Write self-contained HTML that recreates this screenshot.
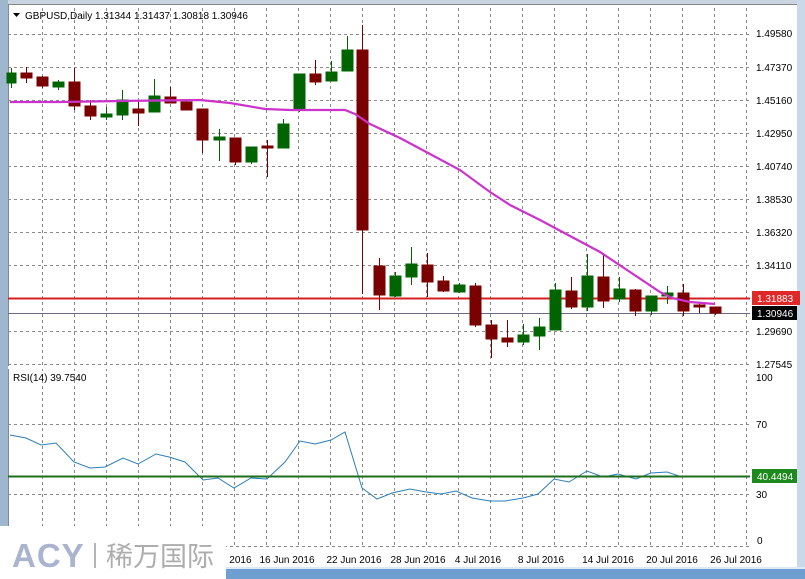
<!DOCTYPE html>
<html><head><meta charset="utf-8"><style>
html,body{margin:0;padding:0;width:805px;height:579px;overflow:hidden;background:#fff}
svg{display:block}
text{font-family:"Liberation Sans",sans-serif;font-size:10px;fill:#000}
</style></head><body>
<svg width="805" height="579" viewBox="0 0 805 579" xmlns="http://www.w3.org/2000/svg">
<rect x="0" y="0" width="805" height="579" fill="#fff"/>
<rect x="0" y="0" width="805" height="4" fill="#c8d4e0"/>
<rect x="0" y="0" width="8" height="579" fill="#9fb6cf"/>
<rect x="797" y="0" width="8" height="579" fill="#c9d9ea"/>
<rect x="0" y="569" width="805" height="10" fill="#6f9fd0"/>
<rect x="0" y="567" width="805" height="2" fill="#dbe8f5"/>
<rect x="8" y="4" width="789" height="563" fill="#fff"/>
<line x1="8" y1="4.5" x2="797" y2="4.5" stroke="#888"/>
<line x1="8.5" y1="4" x2="8.5" y2="567" stroke="#888"/>
<g stroke="#8a8a8a" stroke-width="1" stroke-dasharray="3,3">
<line x1="42.5" y1="8" x2="42.5" y2="547"/><line x1="74.5" y1="8" x2="74.5" y2="547"/><line x1="106.5" y1="8" x2="106.5" y2="547"/><line x1="138.5" y1="8" x2="138.5" y2="547"/><line x1="170.5" y1="8" x2="170.5" y2="547"/><line x1="202.5" y1="8" x2="202.5" y2="547"/><line x1="234.5" y1="8" x2="234.5" y2="547"/><line x1="266.5" y1="8" x2="266.5" y2="547"/><line x1="298.5" y1="8" x2="298.5" y2="547"/><line x1="330.5" y1="8" x2="330.5" y2="547"/><line x1="362.5" y1="8" x2="362.5" y2="547"/><line x1="394.5" y1="8" x2="394.5" y2="547"/><line x1="426.5" y1="8" x2="426.5" y2="547"/><line x1="458.5" y1="8" x2="458.5" y2="547"/><line x1="490.5" y1="8" x2="490.5" y2="547"/><line x1="522.5" y1="8" x2="522.5" y2="547"/><line x1="554.5" y1="8" x2="554.5" y2="547"/><line x1="586.5" y1="8" x2="586.5" y2="547"/><line x1="618.5" y1="8" x2="618.5" y2="547"/><line x1="650.5" y1="8" x2="650.5" y2="547"/><line x1="682.5" y1="8" x2="682.5" y2="547"/><line x1="714.5" y1="8" x2="714.5" y2="547"/><line x1="746.5" y1="8" x2="746.5" y2="547"/>
<line x1="8" y1="34.5" x2="750" y2="34.5"/><line x1="8" y1="67.5" x2="750" y2="67.5"/><line x1="8" y1="100.5" x2="750" y2="100.5"/><line x1="8" y1="133.5" x2="750" y2="133.5"/><line x1="8" y1="166.5" x2="750" y2="166.5"/><line x1="8" y1="199.5" x2="750" y2="199.5"/><line x1="8" y1="232.5" x2="750" y2="232.5"/><line x1="8" y1="265.5" x2="750" y2="265.5"/><line x1="8" y1="331.5" x2="750" y2="331.5"/><line x1="8" y1="364.5" x2="750" y2="364.5"/>
<line x1="8" y1="424.5" x2="750" y2="424.5"/><line x1="8" y1="494.5" x2="750" y2="494.5"/><line x1="8" y1="546.5" x2="750" y2="546.5"/>
</g>
<line x1="8" y1="367.5" x2="750" y2="367.5" stroke="#fff" stroke-width="3"/>
<line x1="8" y1="313.5" x2="750" y2="313.5" stroke="#6a6a80" stroke-width="1"/>
<line x1="8" y1="298.5" x2="750" y2="298.5" stroke="#d42020" stroke-width="2"/>
<g stroke-width="1">
<g stroke="#006400" fill="#006400">
<line x1="11.5" y1="68" x2="11.5" y2="88"/><rect x="7" y="73" width="9" height="10"/>
<line x1="58.5" y1="80" x2="58.5" y2="90"/><rect x="53" y="82" width="11" height="5"/>
<line x1="106.5" y1="107" x2="106.5" y2="120"/><rect x="101" y="114" width="11" height="3"/>
<line x1="122.5" y1="90" x2="122.5" y2="120"/><rect x="117" y="100" width="11" height="15"/>
<line x1="154.5" y1="79" x2="154.5" y2="112"/><rect x="149" y="96" width="11" height="16"/>
<line x1="219.5" y1="129" x2="219.5" y2="161"/><rect x="214" y="137" width="11" height="3"/>
<line x1="251.5" y1="147" x2="251.5" y2="164"/><rect x="246" y="147" width="11" height="15"/>
<line x1="283.5" y1="119" x2="283.5" y2="148"/><rect x="278" y="124" width="11" height="24"/>
<line x1="299.5" y1="74" x2="299.5" y2="112"/><rect x="294" y="74" width="11" height="35"/>
<line x1="331.5" y1="61" x2="331.5" y2="81"/><rect x="326" y="72" width="11" height="9"/>
<line x1="347.5" y1="36" x2="347.5" y2="71"/><rect x="342" y="50" width="11" height="21"/>
<line x1="395.5" y1="272" x2="395.5" y2="297"/><rect x="390" y="276" width="11" height="20"/>
<line x1="411.5" y1="247" x2="411.5" y2="285"/><rect x="406" y="264" width="11" height="13"/>
<line x1="459.5" y1="283" x2="459.5" y2="293"/><rect x="454" y="285" width="11" height="7"/>
<line x1="523.5" y1="324" x2="523.5" y2="345"/><rect x="518" y="335" width="11" height="7"/>
<line x1="539.5" y1="318" x2="539.5" y2="350"/><rect x="534" y="327" width="11" height="9"/>
<line x1="555.5" y1="283" x2="555.5" y2="330"/><rect x="550" y="290" width="11" height="40"/>
<line x1="587.5" y1="254" x2="587.5" y2="311"/><rect x="582" y="276" width="11" height="31"/>
<line x1="619.5" y1="277" x2="619.5" y2="302"/><rect x="614" y="289" width="11" height="10"/>
<line x1="651.5" y1="296" x2="651.5" y2="315"/><rect x="646" y="296" width="11" height="15"/>
<line x1="667.5" y1="286" x2="667.5" y2="304"/><rect x="662" y="293" width="11" height="3"/>
</g>
<g stroke="#7a0000" fill="#7a0000">
<line x1="26.5" y1="67" x2="26.5" y2="83"/><rect x="21" y="73" width="11" height="5"/>
<line x1="42.5" y1="76" x2="42.5" y2="88"/><rect x="37" y="77" width="11" height="9"/>
<line x1="74.5" y1="68" x2="74.5" y2="110"/><rect x="69" y="82" width="11" height="24"/>
<line x1="90.5" y1="100" x2="90.5" y2="120"/><rect x="85" y="106" width="11" height="10"/>
<line x1="138.5" y1="100" x2="138.5" y2="126"/><rect x="133" y="109" width="11" height="4"/>
<line x1="170.5" y1="87" x2="170.5" y2="103"/><rect x="165" y="97" width="11" height="6"/>
<line x1="186.5" y1="100" x2="186.5" y2="110"/><rect x="181" y="102" width="11" height="8"/>
<line x1="202.5" y1="109" x2="202.5" y2="153"/><rect x="197" y="109" width="11" height="31"/>
<line x1="235.5" y1="138" x2="235.5" y2="165"/><rect x="230" y="138" width="11" height="24"/>
<line x1="267.5" y1="140" x2="267.5" y2="177"/><rect x="262" y="146" width="11" height="2"/>
<line x1="315.5" y1="60" x2="315.5" y2="85"/><rect x="310" y="74" width="11" height="8"/>
<line x1="362.5" y1="25" x2="362.5" y2="294"/><rect x="357" y="50" width="11" height="180"/>
<line x1="379.5" y1="258" x2="379.5" y2="310"/><rect x="374" y="266" width="11" height="29"/>
<line x1="427.5" y1="253" x2="427.5" y2="297"/><rect x="422" y="265" width="11" height="17"/>
<line x1="443.5" y1="276" x2="443.5" y2="292"/><rect x="438" y="281" width="11" height="10"/>
<line x1="475.5" y1="283" x2="475.5" y2="327"/><rect x="470" y="286" width="11" height="39"/>
<line x1="491.5" y1="320" x2="491.5" y2="358"/><rect x="486" y="325" width="11" height="14"/>
<line x1="507.5" y1="320" x2="507.5" y2="347"/><rect x="502" y="338" width="11" height="4"/>
<line x1="571.5" y1="277" x2="571.5" y2="309"/><rect x="566" y="291" width="11" height="16"/>
<line x1="603.5" y1="255" x2="603.5" y2="308"/><rect x="598" y="277" width="11" height="24"/>
<line x1="635.5" y1="289" x2="635.5" y2="316"/><rect x="630" y="290" width="11" height="21"/>
<line x1="683.5" y1="284" x2="683.5" y2="316"/><rect x="678" y="293" width="11" height="18"/>
<line x1="699.5" y1="302" x2="699.5" y2="313"/><rect x="694" y="305" width="11" height="2"/>
<line x1="715.5" y1="307" x2="715.5" y2="315"/><rect x="710" y="307" width="11" height="6"/>
</g>
</g>
<polyline fill="none" stroke="#cc33cc" stroke-width="2.2" points="10,102 60,102 120,101 200,100 230,103 265,109 290,110 345,110 355,114 370,124 400,138 430,154 460,170 490,192 510,205 540,220 570,236 600,252 630,272 660,292 672,298 690,302 715,304"/>
<polyline fill="none" stroke="#2a7fb8" stroke-width="1" points="10,435 26,438 41,445 56,443 74,462 90,468 105,467 123,458 138,464 156,454 169,457 185,462 203,480 218,478 234,488 251,478 267,479 285,462 300,441 315,444 331,440 345,432 362,488 377,499 392,493 410,489 426,492 441,494 456,491 472,498 490,501 505,501 523,498 538,494 554,479 569,482 587,471 603,477 618,474 636,479 651,473 667,472 682,477 697,476 713,477 728,476"/>
<line x1="8" y1="476.5" x2="750" y2="476.5" stroke="#1e6e1e" stroke-width="2"/>
<text x="756" y="37">1.49580</text>
<text x="756" y="71">1.47370</text>
<text x="756" y="104">1.45160</text>
<text x="756" y="137">1.42950</text>
<text x="756" y="170">1.40740</text>
<text x="756" y="203">1.38530</text>
<text x="756" y="236">1.36320</text>
<text x="756" y="269">1.34110</text>
<text x="756" y="335">1.29690</text>
<text x="756" y="368">1.27545</text>
<text x="756" y="381">100</text>
<text x="756" y="428">70</text>
<text x="756" y="498">30</text>
<text x="757" y="544">0</text>
<rect x="752" y="291" width="48" height="14" fill="#e02828"/>
<text x="757" y="302" style="fill:#fff">1.31883</text>
<rect x="752" y="306" width="45" height="14" fill="#000"/>
<text x="757" y="317" style="fill:#fff">1.30946</text>
<rect x="752" y="469" width="45" height="14" fill="#1e8a1e"/>
<text x="757" y="480" style="fill:#fff">40.4494</text>
<path d="M13 13 L20 13 L16.5 17 Z" fill="#000"/>
<text x="25" y="19">GBPUSD,Daily  1.31344 1.31437 1.30818 1.30946</text>
<text x="13" y="381">RSI(14) 39.7540</text>
<g text-anchor="middle">
<text x="224" y="563">10 Jun 2016</text>
<text x="287" y="563">16 Jun 2016</text>
<text x="354" y="563">22 Jun 2016</text>
<text x="418" y="563">28 Jun 2016</text>
<text x="478" y="563">4 Jul 2016</text>
<text x="541" y="563">8 Jul 2016</text>
<text x="608" y="563">14 Jul 2016</text>
<text x="672" y="563">20 Jul 2016</text>
<text x="736" y="563">26 Jul 2016</text>
</g>
<rect x="0" y="526" width="226" height="53" fill="#fff"/>
<text x="12" y="567" style="font-size:33px;font-weight:bold;fill:#a9b4cf;letter-spacing:1px">ACY</text>
<rect x="94" y="543" width="2" height="25" fill="#b5b5b5"/>
<text x="106" y="566" style="font-family:'Liberation Sans','Noto Sans CJK SC',sans-serif;font-size:27px;fill:#adadad">稀万国际</text>
</svg>
</body></html>
